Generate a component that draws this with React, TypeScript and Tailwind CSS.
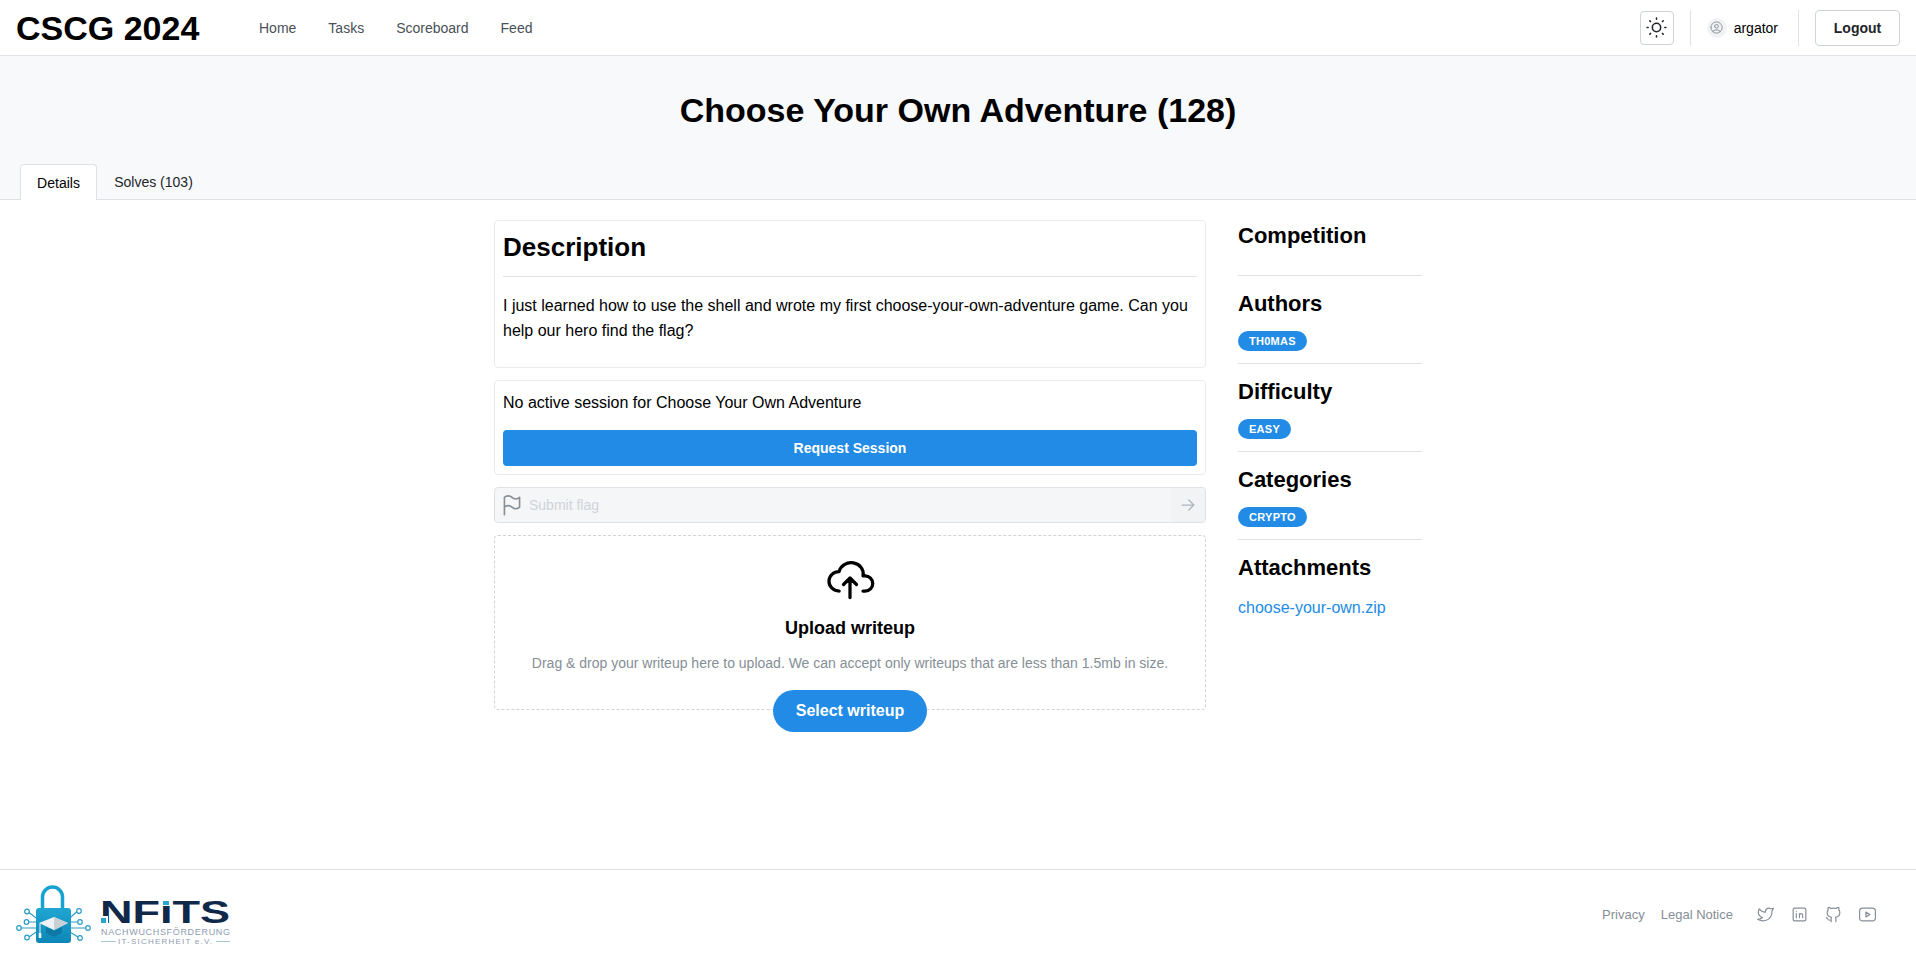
const navLinks = ["Home", "Tasks", "Scoreboard", "Feed"];

function TablerIcon({ d, size, stroke = 1.5, className }: { d: string; size: number; stroke?: number; className?: string }) {
  return (
    <svg
      width={size}
      height={size}
      viewBox="0 0 24 24"
      fill="none"
      stroke="currentColor"
      strokeWidth={stroke}
      strokeLinecap="round"
      strokeLinejoin="round"
      className={className}
    >
      <path d={d} />
    </svg>
  );
}

const icons = {
  sun: "M8 12a4 4 0 1 0 8 0a4 4 0 1 0 -8 0M3 12h1m8 -9v1m8 8h1m-9 8v1m-6.400 -15.400l.7 .7m12.100 -.7l-.7 .7m0 11.400l.7 .7m-12.100 -.7l-.7 .7",
  user: "M3 12a9 9 0 1 0 18 0a9 9 0 1 0 -18 0M9 10a3 3 0 1 0 6 0a3 3 0 1 0 -6 0M6.168 18.849a4 4 0 0 1 3.832 -2.849h4a4 4 0 0 1 3.832 2.849",
  flag: "M5 5a5 5 0 0 1 7 0a5 5 0 0 0 7 0v9a5 5 0 0 1 -7 0a5 5 0 0 0 -7 0v-9zM5 21v-7",
  arrow: "M5 12l14 0M13 18l6 -6M13 6l6 6",
  cloud: "M7 18a4.600 4.400 0 0 1 0 -9a5 4.500 0 0 1 11 2h1a3.500 3.500 0 0 1 0 7h-1M9 15l3 -3l3 3M12 12l0 9",
  twitter:
    "M22 4.010c-1 .49 -1.980 .689 -3 .99c-1.121 -1.265 -2.783 -1.335 -4.380 -.737s-2.643 2.060 -2.620 3.737v1c-3.245 .083 -6.135 -1.395 -8 -4c0 0 -4.182 7.433 4 11c-1.872 1.247 -3.739 2.088 -6 2c3.308 1.803 6.913 2.423 10.034 1.517c3.580 -1.040 6.522 -3.723 7.651 -7.742a13.840 13.840 0 0 0 .497 -3.753c0 -.249 1.510 -2.772 1.818 -4.013z",
  linkedin: "M4 6a2 2 0 0 1 2 -2h12a2 2 0 0 1 2 2v12a2 2 0 0 1 -2 2h-12a2 2 0 0 1 -2 -2zM8 11l0 5M8 8l0 .01M12 16l0 -5M16 16v-3a2 2 0 0 0 -4 0",
  github:
    "M9 19c-4.300 1.400 -4.300 -2.500 -6 -3m12 5v-3.500c0 -1 .1 -1.400 -.5 -2c2.800 -.3 5.500 -1.400 5.500 -6a4.600 4.600 0 0 0 -1.300 -3.200a4.200 4.200 0 0 0 -.1 -3.200s-1.100 -.3 -3.500 1.300a12.300 12.300 0 0 0 -6.200 0c-2.400 -1.600 -3.500 -1.300 -3.500 -1.300a4.200 4.200 0 0 0 -.1 3.200a4.600 4.600 0 0 0 -1.300 3.200c0 4.600 2.700 5.700 5.500 6c-.6 .6 -.6 1.200 -.5 2v3.500",
  youtube: "M2 8a4 4 0 0 1 4 -4h12a4 4 0 0 1 4 4v8a4 4 0 0 1 -4 4h-12a4 4 0 0 1 -4 -4v-8zM10 9l5 3l-5 3z",
};

function Logo() {
  return (
    <svg width="220" height="70" viewBox="14 880 220 70" className="block">
      <defs>
        <linearGradient id="lock" x1="0" y1="0" x2="0" y2="1">
          <stop offset="0" stopColor="#20a6d2" />
          <stop offset="1" stopColor="#0c86b8" />
        </linearGradient>
      </defs>
      {/* circuit lines */}
      <g stroke="#2a9cc6" strokeWidth="1.2" fill="none">
        <path d="M29 912.500L36 918H42M29 922H42M21 928H42M29 937L36 932H42" />
        <path d="M77 911.500L70 918H64M78 922H64M86 928H64M78 937L70 932H64" />
        <circle cx="27" cy="911.500" r="2.300" />
        <circle cx="26.500" cy="922" r="2.300" />
        <circle cx="19" cy="928" r="2.300" />
        <circle cx="27" cy="937.500" r="2.300" />
        <circle cx="79" cy="911" r="2.300" />
        <circle cx="80" cy="922" r="2.300" />
        <circle cx="88" cy="928" r="2.300" />
        <circle cx="80" cy="938" r="2.300" />
      </g>
      {/* padlock */}
      <path d="M42.500 909V897a10 10 0 0 1 20 0V909" stroke="#17a2d0" strokeWidth="3.500" fill="none" />
      <rect x="36" y="908" width="35" height="35" rx="3" fill="url(#lock)" />
      <path d="M39 923L54 917L68 923L54 930Z" fill="#eef2f4" />
      <path d="M54 917L68 923L54 930Z" fill="#c9d0d5" />
      <path d="M46 927V933L54 937L62 933V927L54 931Z" fill="#0f79a6" />
      <path d="M40 923.500V934" stroke="#eef2f4" strokeWidth="1" />
      <rect x="38.700" y="933" width="2.600" height="5" fill="#eef2f4" />
      {/* wordmark */}
      <text x="100" y="923" fontFamily="Liberation Sans" fontWeight="700" fontSize="30.500" fill="#10294b" textLength="130" lengthAdjust="spacingAndGlyphs">
        NFITS
      </text>
      <rect x="100" y="916" width="8" height="8" fill="#ffffff" />
      <rect x="101" y="918" width="5" height="5" fill="#2aa5cf" />
      <rect x="159" y="899" width="13" height="7" fill="#ffffff" />
      <rect x="163" y="901" width="6" height="4" fill="#2aa5cf" />
      <text x="101" y="935" fontFamily="Liberation Sans" fontSize="9" fill="#8e9bb0" textLength="129" lengthAdjust="spacing">
        NACHWUCHSFÖRDERUNG
      </text>
      <path d="M101 941.500H116M216 941.500H230" stroke="#8fb8d0" strokeWidth="0.800" />
      <text x="118" y="944" fontFamily="Liberation Sans" fontSize="8" fill="#8e9bb0" textLength="94" lengthAdjust="spacing">
        IT-SICHERHEIT e.V.
      </text>
    </svg>
  );
}

function SideSection({ title, badge }: { title: string; badge: string }) {
  return (
    <div className="h-[88px] border-t border-[#dee2e6] pt-[14px]">
      <h3 className="text-[22px] leading-[28px] font-bold text-black">{title}</h3>
      <div className="mt-[13px] flex">
        <span className="inline-flex h-5 items-center rounded-full bg-[#228be6] px-[11px] text-[11px] font-bold tracking-[0.28px] text-white">
          {badge}
        </span>
      </div>
    </div>
  );
}

export default function App() {
  return (
    <div className="flex min-h-[959px] flex-col bg-white font-['Liberation_Sans',Arial,sans-serif] text-black">
      {/* Navbar */}
      <header className="flex h-14 shrink-0 items-center border-b border-[#dee2e6] pr-4 pl-4">
        <div className="w-[243px] text-[34px] leading-none font-bold">CSCG 2024</div>
        <nav className="flex gap-8 text-sm text-[#495057]">
          {navLinks.map((link) => (
            <a key={link} href="#">
              {link}
            </a>
          ))}
        </nav>
        <div className="ml-auto flex items-center">
          <button className="flex h-[34px] w-[34px] items-center justify-center rounded border border-[#ced4da] text-[#212529]">
            <TablerIcon d={icons.sun} size={25} />
          </button>
          <div className="mx-4 h-9 w-px bg-[#dee2e6]" />
          <div className="flex h-5 w-5 items-center justify-center rounded-full bg-[#f1f3f5] text-[#868e96]">
            <TablerIcon d={icons.user} size={15} />
          </div>
          <span className="ml-[7px] text-sm text-black">argator</span>
          <div className="mr-4 ml-5 h-9 w-px bg-[#dee2e6]" />
          <button className="h-9 w-[85px] rounded border border-[#ced4da] text-sm font-bold text-[#212529]">Logout</button>
        </div>
      </header>

      {/* Hero */}
      <section className="h-[144px] shrink-0 border-b border-[#dee2e6] bg-[#f8f9fa]">
        <h1 className="pt-8 text-center text-[34px] leading-[44px] font-bold">Choose Your Own Adventure (128)</h1>
        <div className="mt-8 flex pl-5 text-sm">
          <div className="flex h-[36px] w-[77px] items-center justify-center rounded-t border border-b-0 border-[#dee2e6] bg-white">Details</div>
          <div className="flex h-9 w-[113px] items-center justify-center text-[#212529]">Solves (103)</div>
        </div>
      </section>

      {/* Main */}
      <main className="mx-auto flex w-[928px] flex-1 gap-8 pt-5">
        <div className="flex w-[712px] shrink-0 flex-col gap-3">
          <div className="h-[148px] rounded border border-[#e9ecef] px-2">
            <h2 className="pt-[9px] text-[26px] leading-[34px] font-bold">Description</h2>
            <div className="mt-3 border-t border-[#dee2e6]" />
            <p className="mt-4 text-base leading-[25px]">
              I just learned how to use the shell and wrote my first choose-your-own-adventure game. Can you help our hero find the flag?
            </p>
          </div>

          <div className="h-[95px] rounded border border-[#e9ecef] px-2 pt-[10px]">
            <p className="text-base leading-[24px]">No active session for Choose Your Own Adventure</p>
            <button className="mt-[15px] h-9 w-full rounded bg-[#228be6] text-sm font-bold text-white">Request Session</button>
          </div>

          <div className="flex h-9 items-center overflow-hidden rounded border border-[#dee2e6] bg-[#f5f6f8]">
            <TablerIcon d={icons.flag} size={26} className="ml-1 text-[#868e96]" />
            <span className="ml-1 text-sm text-[#ced4da]">Submit flag</span>
            <div className="ml-auto flex h-full w-[34px] items-center justify-center bg-[#f1f3f5] text-[#adb5bd]">
              <TablerIcon d={icons.arrow} size={20} />
            </div>
          </div>

          <div className="relative flex h-[175px] flex-col items-center rounded border border-dashed border-[#ced4da] pt-4">
            <TablerIcon d={icons.cloud} size={52} className="text-black" />
            <h4 className="mt-[11px] text-lg leading-[26px] font-bold">Upload writeup</h4>
            <p className="mt-[11px] text-sm leading-[22px] text-[#868e96]">
              Drag &amp; drop your writeup here to upload. We can accept only writeups that are less than 1.5mb in size.
            </p>
            <button className="absolute bottom-[-23px] left-1/2 h-[42px] w-[154px] -translate-x-1/2 rounded-full bg-[#228be6] text-base font-bold text-white">
              Select writeup
            </button>
          </div>
        </div>

        <aside className="w-[184px] shrink-0">
          <div className="h-[55px] pt-[2px]">
            <h3 className="text-[22px] leading-[28px] font-bold">Competition</h3>
          </div>
          <SideSection title="Authors" badge="TH0MAS" />
          <SideSection title="Difficulty" badge="EASY" />
          <SideSection title="Categories" badge="CRYPTO" />
          <div className="border-t border-[#dee2e6] pt-[14px]">
            <h3 className="text-[22px] leading-[28px] font-bold">Attachments</h3>
            <a href="#" className="mt-[13px] block text-base leading-[25px] text-[#228be6]">
              choose-your-own.zip
            </a>
          </div>
        </aside>
      </main>

      {/* Footer */}
      <footer className="flex h-[90px] shrink-0 items-start border-t border-[#dee2e6] pr-[39px] pl-[14px]">
        <div className="pt-[10px]">
          <Logo />
        </div>
        <div className="ml-auto flex items-center pt-[35px] text-[13px] text-[#868e96]">
          <a href="#">Privacy</a>
          <a href="#" className="ml-[16px]">
            Legal Notice
          </a>
          <div className="ml-[23px] flex items-center gap-[15px]">
            <TablerIcon d={icons.twitter} size={19} />
            <TablerIcon d={icons.linkedin} size={19} />
            <TablerIcon d={icons.github} size={19} />
            <TablerIcon d={icons.youtube} size={19} />
          </div>
        </div>
      </footer>
    </div>
  );
}
